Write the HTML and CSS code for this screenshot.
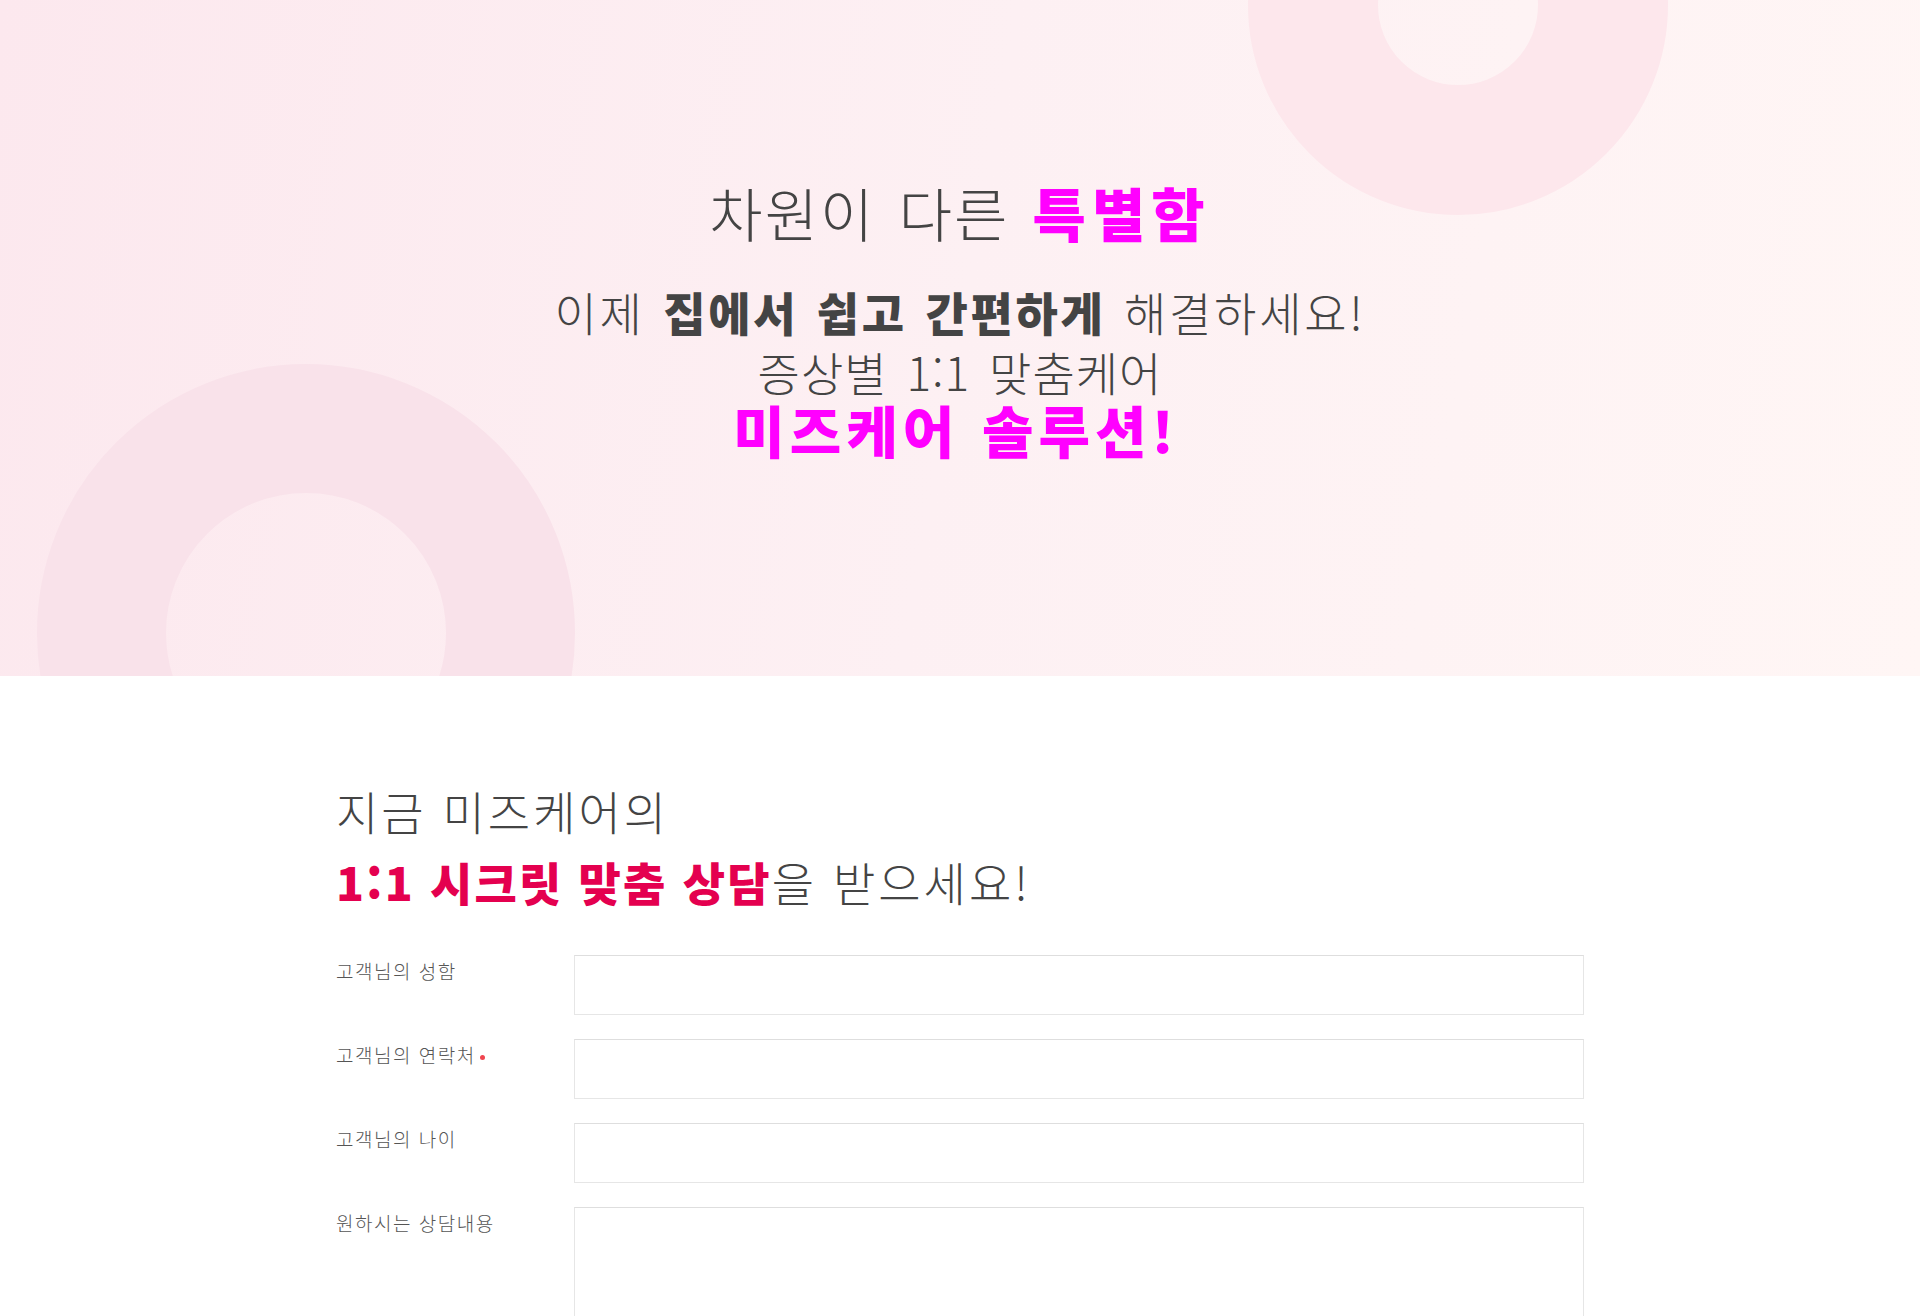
FILE: index.html
```html
<!DOCTYPE html>
<html lang="ko">
<head>
<meta charset="utf-8">
<title>미즈케어</title>
<link rel="stylesheet" href="styles.css">
</head>
<body>
<section class="hero">
  <span class="ring ring-tr"></span>
  <span class="ring ring-bl"></span>
  <div class="hero-text">
    <p class="hero-l1">차원이 다른 <strong class="mag">특별함</strong></p>
    <p class="hero-l2">이제 <strong class="dark">집에서 쉽고 간편하게</strong> 해결하세요!</p>
    <p class="hero-l3">증상별 1:1 맞춤케어</p>
    <p class="hero-l4">미즈케어 솔루션!</p>
  </div>
</section>
<section class="consult">
  <div class="container">
    <h2 class="title">
      <span class="title-line">지금 미즈케어의</span>
      <span class="title-line"><strong class="crim">1:1 시크릿 맞춤 상담</strong>을 받으세요!</span>
    </h2>
    <form class="form">
      <label class="lbl" for="f-name">고객님의 성함</label>
      <input class="field" id="f-name" type="text">
      <label class="lbl" for="f-tel">고객님의 연락처<span class="req"></span></label>
      <input class="field" id="f-tel" type="text">
      <label class="lbl" for="f-age">고객님의 나이</label>
      <input class="field" id="f-age" type="text">
      <label class="lbl" for="f-msg">원하시는 상담내용</label>
      <textarea class="field area" id="f-msg"></textarea>
    </form>
  </div>
</section>
</body>
</html>
```
FILE: styles.css
```css
* { box-sizing: border-box; }
html, body { margin: 0; padding: 0; }
body {
  font-family: "Noto Sans CJK KR", "Noto Sans", sans-serif;
  color: #444;
  background: #fff;
}
p { margin: 0; }

.hero {
  position: relative;
  height: 676px;
  overflow: hidden;
  background: linear-gradient(100deg, #fce8ee 0%, #fdf0f3 50%, #fff6f5 100%);
}
.ring {
  position: absolute;
  border-radius: 50%;
  border-style: solid;
}
.ring-tr {
  left: 1248px;
  top: -205px;
  width: 420px;
  height: 420px;
  border-width: 130px;
  border-color: #fde7ec;
}
.ring-bl {
  left: 37px;
  top: 364px;
  width: 538px;
  height: 538px;
  border-width: 129px;
  border-color: #f9e2ea;
}
.hero-text {
  position: relative;
  padding-top: 177px;
  text-align: center;
  color: #444;
}
.hero-l1 {
  font-size: 58px;
  line-height: 70px;
  font-weight: 300;
  letter-spacing: 2px;
  word-spacing: 5px;
  margin-bottom: 34px;
}
.hero-l2 {
  font-size: 46px;
  line-height: 60px;
  font-weight: 300;
  letter-spacing: 2.7px;
  word-spacing: 3px;
}
.hero-l3 {
  font-size: 46px;
  line-height: 60px;
  font-weight: 300;
  letter-spacing: 1px;
  word-spacing: 5px;
}
.hero-l4 {
  font-size: 56px;
  line-height: 56px;
  font-weight: 900;
  color: #ff00ff;
  letter-spacing: 5px;
  word-spacing: 2px;
  padding-right: 8px;
}
.mag { color: #ff00ff; font-weight: 900; letter-spacing: 6px; }
.dark { color: #444; font-weight: 900; }

.consult {
  padding-top: 99px;
  padding-bottom: 80px;
}
.container {
  width: 1248px;
  margin: 0 auto;
}
.title {
  margin: 0 0 38px;
  font-size: 46px;
  line-height: 71px;
  font-weight: 300;
  color: #444;
  letter-spacing: 3px;
}
.title-line { display: block; }
.crim { color: #e4004f; font-weight: 900; letter-spacing: 2.2px; }

.form {
  display: grid;
  grid-template-columns: 238px 1fr;
  row-gap: 24px;
}
.lbl {
  font-size: 19px;
  line-height: 27px;
  font-weight: 300;
  color: #555;
  letter-spacing: 1.5px;
  padding-top: 2px;
}
.req {
  display: inline-block;
  width: 5px;
  height: 5px;
  border-radius: 50%;
  background: #f0454f;
  margin-left: 4px;
  vertical-align: middle;
}
.field {
  display: block;
  width: 100%;
  height: 60px;
  margin: 0;
  border: 1px solid #e6e6e6;
  border-top-color: #dedede;
  background: #fff;
  font: inherit;
  outline: none;
}
.area {
  height: 220px;
  resize: none;
}
```
